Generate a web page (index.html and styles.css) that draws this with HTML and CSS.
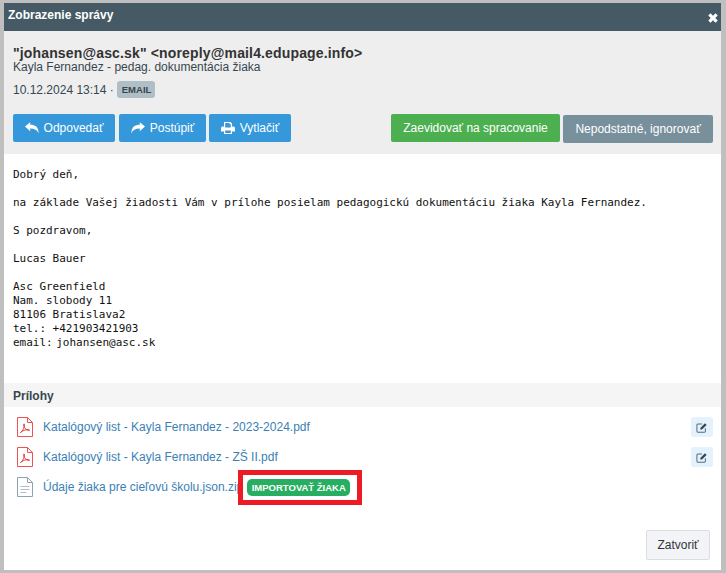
FILE: index.html
```html
<!DOCTYPE html>
<html lang="sk">
<head>
<meta charset="utf-8">
<title>Zobrazenie správy</title>
<link rel="stylesheet" href="styles.css">
</head>
<body>
<div class="dialog">
  <div class="titlebar">
    <span class="title">Zobrazenie správy</span>
    <svg class="close" viewBox="1 1 8 8"><path d="M1.200 3 3 1.200 5 3.200 7 1.200 8.800 3 6.800 5 8.800 7 7 8.800 5 6.800 3 8.800 1.200 7 3.200 5Z"/></svg>
  </div>
  <div class="head">
    <div class="from">"johansen@asc.sk" &lt;noreply@mail4.edupage.info&gt;</div>
    <div class="subject">Kayla Fernandez - pedag. dokumentácia žiaka</div>
    <div class="meta"><span>10.12.2024 13:14 ·</span><span class="tag">EMAIL</span></div>
    <div class="actions">
      <div class="group">
        <button class="btn blue reply"><svg class="ico" viewBox="0 0 14 12"><path d="M0 4.600 5.200.2V2.800C10 2.800 13.600 4.600 13.600 11.400 12.200 8 9.600 6.600 5.200 6.600V9.200Z"/></svg>Odpovedať</button>
        <button class="btn blue forward"><svg class="ico" viewBox="0 0 14 12"><path d="M14 4.600 8.800.2V2.800C4 2.800.4 4.600.4 11.400 1.800 8 4.400 6.600 8.800 6.600V9.200Z"/></svg>Postúpiť</button>
        <button class="btn blue print"><svg class="ico" viewBox="0 0 14 12"><path fill-rule="evenodd" d="M3 0H9.500L11 1.500V4.400H12.400C13.300 4.400 14 5.100 14 6V9.600H11V12H3V9.600H0V6C0 5.100.7 4.400 1.600 4.400H3ZM4.200 1.100V5.400H9.800V2.200H8.600V1.100ZM4.200 8.400V10.900H9.800V8.400Z"/></svg>Vytlačiť</button>
      </div>
      <div class="group right">
        <button class="btn green">Zaevidovať na spracovanie</button>
        <button class="btn gray">Nepodstatné, ignorovať</button>
      </div>
    </div>
  </div>
  <pre class="message">Dobrý deň,

na základe Vašej žiadosti Vám v prílohe posielam pedagogickú dokumentáciu žiaka Kayla Fernandez.

S pozdravom,

Lucas Bauer

Asc Greenfield
Nam. slobody 11
81106 Bratislava2
tel.: +421903421903
<span class="tight">email: </span>johansen@asc.sk</pre>
  <div class="section">Prílohy</div>
  <div class="files">
    <div class="file">
      <svg class="doc" viewBox="0 0 16 20"><path class="sheet red" d="M.5.5H10.500L15.500 5.500V19.500H.5ZM10.500.5V5.500H15.500"/><path class="sign" d="M3.500 15.500C6 14 8 9 7.200 7 6.600 6.200 6.400 8 7.400 10.400 8.400 12.400 10.500 13.400 12.600 13.200 11.500 12.200 7 12.400 3.500 15.500Z"/></svg>
      <a class="name">Katalógový list - Kayla Fernandez - 2023-2024.pdf</a>
      <span class="edit"><svg viewBox="0 0 14 13"><path class="pen-box" d="M11 7.500V11C11 11.600 10.600 12 10 12H2C1.400 12 1 11.600 1 11V3.500C1 2.900 1.400 2.500 2 2.500H7"/><path class="pen" d="M5 7 10.500 1.500 12.500 3.500 7 9H5Z"/></svg></span>
    </div>
    <div class="file">
      <svg class="doc" viewBox="0 0 16 20"><path class="sheet red" d="M.5.5H10.500L15.500 5.500V19.500H.5ZM10.500.5V5.500H15.500"/><path class="sign" d="M3.500 15.500C6 14 8 9 7.200 7 6.600 6.200 6.400 8 7.400 10.400 8.400 12.400 10.500 13.400 12.600 13.200 11.500 12.200 7 12.400 3.500 15.500Z"/></svg>
      <a class="name">Katalógový list - Kayla Fernandez - ZŠ II.pdf</a>
      <span class="edit"><svg viewBox="0 0 14 13"><path class="pen-box" d="M11 7.500V11C11 11.600 10.600 12 10 12H2C1.400 12 1 11.600 1 11V3.500C1 2.900 1.400 2.500 2 2.500H7"/><path class="pen" d="M5 7 10.500 1.500 12.500 3.500 7 9H5Z"/></svg></span>
    </div>
    <div class="file">
      <svg class="doc" viewBox="0 0 16 20"><path class="sheet grey" d="M.5.5H10.500L15.500 5.500V19.500H.5ZM10.500.5V5.500H15.500"/><path class="sheet lines" d="M3.500 9.500H12.500M3.500 12.500H12.500M3.500 15.500H9.500"/></svg>
      <a class="name">Údaje žiaka pre cieľovú školu.json.zip</a>
      <span class="badge">IMPORTOVAŤ ŽIAKA<span class="frame"></span></span>
    </div>
  </div>
  <div class="footer"><button class="btn close-btn">Zatvoriť</button></div>
</div>
</body>
</html>
```
FILE: styles.css
```css
* { box-sizing: border-box; }
html, body { margin: 0; height: 100%; }
body {
  background: #bfbfbf;
  padding: 3px 5px 3px 4px;
  font-family: "Liberation Sans", Arial, sans-serif;
  font-size: 12px;
  color: #333;
  overflow: hidden;
}
.dialog {
  height: 567px;
  background: #fff;
  display: flex;
  flex-direction: column;
}
.titlebar {
  height: 28px;
  flex: none;
  background: #455a64;
  color: #fff;
  display: flex;
  align-items: center;
  justify-content: space-between;
  padding: 0 3px 4px 4px;
}
.title { font-weight: bold; font-size: 12px; }
.close { width: 10px; height: 10px; fill: #fff; margin-top: 5px; }
.head {
  flex: none;
  height: 123px;
  background: #eee;
  padding: 14px 8px 0 9px;
}
.from { font-size: 14px; font-weight: bold; line-height: 16px; color: #333; letter-spacing: .15px; }
.subject { font-size: 12px; line-height: 13px; color: #37474f; }
.meta {
  display: flex;
  align-items: center;
  gap: 3px;
  margin-top: 7px;
  height: 17px;
  color: #37474f;
}
.tag {
  background: #b0bec5;
  border-radius: 3px;
  font-size: 9.500px;
  font-weight: bold;
  padding: 0 5px;
  line-height: 17px;
  width: 38px;
  white-space: nowrap;
}
.actions {
  display: flex;
  justify-content: space-between;
  margin-top: 16px;
}
.group { display: flex; gap: 4px; }
.group.right { gap: 3px; }
.btn {
  height: 28px;
  border: 0;
  border-radius: 2px;
  color: #fff;
  font: 12px "Liberation Sans", Arial, sans-serif;
  display: flex;
  align-items: center;
  justify-content: center;
  padding: 0;
}
.blue { background: #3498db; }
.reply { width: 102px; }
.forward { width: 87px; }
.print { width: 82px; margin-left: -1px; }
.ico { width: 14px; height: 12px; fill: #fff; margin-right: 5px; }
.green { background: #4caf50; width: 169px; }
.gray { background: #78909c; width: 150px; margin-top: 1px; }
.message {
  flex: none;
  height: 229px;
  margin: 0;
  padding: 14px 9px 0;
  font-family: "DejaVu Sans Mono", monospace;
  font-size: 11px;
  line-height: 14px;
  letter-spacing: -.02px;
  color: #111;
}
.tight { word-spacing: -3px; }
.section {
  flex: none;
  height: 24px;
  background: #f5f5f5;
  padding: 0 9px;
  font-weight: bold;
  line-height: 26px;
  color: #37474f;
}
.files {
  flex: 1;
  display: flex;
  flex-direction: column;
  padding: 5px 8px 0 13px;
}
.file {
  height: 30px;
  flex: none;
  display: flex;
  align-items: center;
  position: relative;
}
.doc { width: 16px; height: 20px; flex: none; margin-right: 10px; }
.sheet { fill: none; stroke-width: 1; }
.red { stroke: #ef5350; }
.grey { stroke: #90a4ae; }
.lines { stroke: #b0bec5; }
.sign { fill: none; stroke: #e53935; stroke-width: 1; }
.name { color: #3a7fb5; font-size: 12px; white-space: nowrap; }
.edit {
  margin-left: auto;
  width: 22px;
  height: 20px;
  background: #e3f2fd;
  border-radius: 3px;
  display: flex;
  align-items: center;
  justify-content: center;
}
.edit svg { width: 12px; height: 11px; }
.pen-box { fill: none; stroke: #546e7a; stroke-width: 1.200; }
.pen { fill: #37474f; }
.badge {
  position: relative;
  margin-left: 4px;
  height: 17px;
  width: 103px;
  flex: none;
  background: #27ae60;
  color: #fff;
  border-radius: 5px;
  font-size: 9.500px;
  font-weight: bold;
  line-height: 17px;
  text-align: center;
  white-space: nowrap;
}
.frame {
  position: absolute;
  left: -9px;
  right: -12px;
  top: -9px;
  bottom: -9px;
  border: 5px solid #ed1c24;
}
.footer {
  flex: none;
  display: flex;
  justify-content: flex-end;
  padding: 0 11px 10px 0;
}
.close-btn {
  width: 64px;
  height: 30px;
  background: #f3f4f8;
  border: 1px solid #ddd;
  color: #333;
}
```
